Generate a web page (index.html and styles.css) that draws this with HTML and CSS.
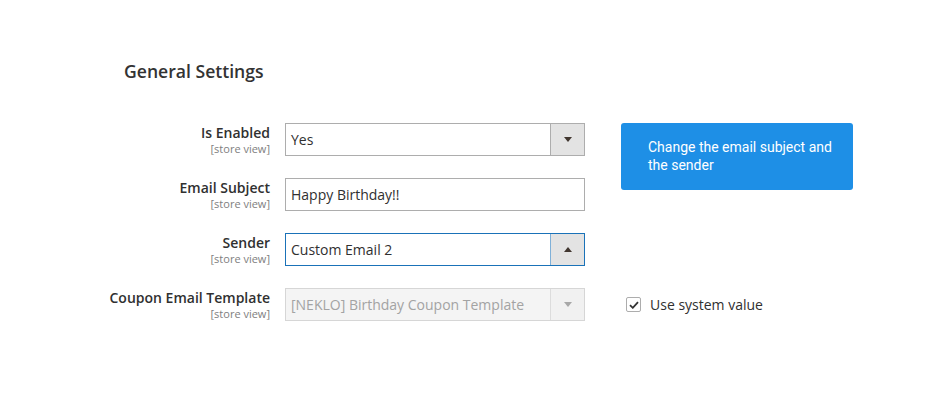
FILE: index.html
```html
<!DOCTYPE html>
<html>
<head>
<meta charset="utf-8">
<link rel="stylesheet" href="styles.css">
</head>
<body>
<div class="page">
  <h2 class="title">General Settings</h2>
  <div class="form">
    <div class="label"><span class="name">Is Enabled</span><span class="scope">[store view]</span></div>
    <div class="control select"><span class="value">Yes</span><span class="btn"><span class="arrow down"></span></span></div>

    <div class="tip">Change the email subject and the sender</div>

    <div class="label"><span class="name">Email Subject</span><span class="scope">[store view]</span></div>
    <div class="control"><span class="value">Happy Birthday!!</span></div>

    <div class="label"><span class="name">Sender</span><span class="scope">[store view]</span></div>
    <div class="control select focus"><span class="value">Custom Email 2</span><span class="btn"><span class="arrow up"></span></span></div>
    <div class="empty"></div>

    <div class="label"><span class="name">Coupon Email Template</span><span class="scope">[store view]</span></div>
    <div class="control select disabled"><span class="value">[NEKLO] Birthday Coupon Template</span><span class="btn"><span class="arrow down"></span></span></div>
    <label class="system">
      <span class="check"><svg width="10" height="8" viewBox="0 0 10 8"><path d="M1 4.2 L3.8 6.8 L9 1.2" fill="none" stroke="#333" stroke-width="1.8"/></svg></span>
      <span>Use system value</span>
    </label>
  </div>
</div>
</body>
</html>
```
FILE: styles.css
```css
html, body {
  margin: 0;
  padding: 0;
  background: #fff;
}
body {
  font-family: "Open Sans", "Liberation Sans", sans-serif;
  color: #303030;
}
.page {
  padding: 59px 0 0 124px;
}
.title {
  margin: 0;
  font-size: 17.6px;
  line-height: 24px;
  font-weight: 600;
  color: #333;
}
.form {
  margin: 40px 0 0 -24px;
  display: grid;
  grid-template-columns: 170px 300px 253px;
  grid-auto-rows: 33px;
  column-gap: 15px;
  row-gap: 22px;
}
.form > .control {
  grid-column: 2;
}
.form > .label {
  grid-column: 1;
}
.label {
  display: flex;
  flex-direction: column;
  align-items: flex-end;
  text-align: right;
  padding-top: 1px;
}
.name {
  font-size: 14px;
  line-height: 18px;
  font-weight: 600;
  color: #303030;
}
.scope {
  font-size: 11px;
  line-height: 13px;
  color: #808080;
}
.control {
  box-sizing: border-box;
  height: 33px;
  border: 1px solid #adadad;
  background: #fff;
  display: flex;
  align-items: stretch;
  font-size: 14px;
}
.value {
  flex: 1;
  display: flex;
  align-items: center;
  padding-left: 5px;
  white-space: nowrap;
  overflow: hidden;
}
.btn {
  width: 33px;
  background: #e3e3e3;
  border-left: 1px solid #adadad;
  display: flex;
  align-items: center;
  justify-content: center;
}
.arrow {
  width: 0;
  height: 0;
  border-left: 4px solid transparent;
  border-right: 4px solid transparent;
}
.arrow.down {
  border-top: 5px solid #41362f;
}
.arrow.up {
  border-bottom: 5px solid #41362f;
}
.focus {
  border-color: #1a72b8;
}
.focus .btn {
  border-left-color: #7fb0d8;
}
.disabled {
  border-color: #d6d6d6;
  background: #f4f4f4;
  color: #a3a3a3;
}
.disabled .btn {
  background: #f1f1f1;
  border-left-color: #dcdcdc;
}
.disabled .arrow.down {
  border-top-color: #a8a8a8;
}
.tip {
  grid-column: 3;
  grid-row: 1 / span 2;
  margin-left: 21px;
  height: 67px;
  box-sizing: border-box;
  padding: 15px 16px 0 27px;
  background: #1e8fe6;
  border-radius: 3px;
  color: #fff;
  font-family: Roboto, "Liberation Sans", sans-serif;
  font-size: 14px;
  line-height: 18px;
}
.empty {
  grid-column: 3;
}
.system {
  grid-column: 3;
  margin-left: 26px;
  display: flex;
  align-items: center;
  font-size: 14px;
  color: #303030;
}
.check {
  box-sizing: border-box;
  width: 15px;
  height: 15px;
  border: 1px solid #adadad;
  border-radius: 2px;
  display: flex;
  align-items: center;
  justify-content: center;
  margin-right: 9px;
}
```
